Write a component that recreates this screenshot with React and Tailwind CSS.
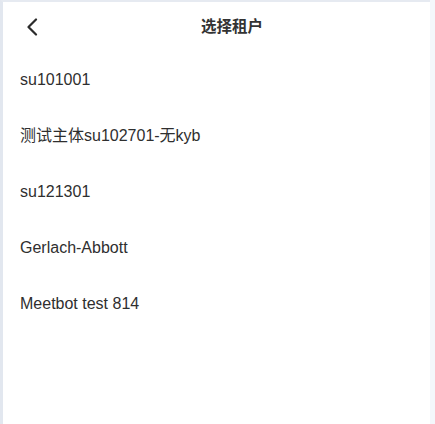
const tenants = [
  "su101001",
  "测试主体su102701-无kyb",
  "su121301",
  "Gerlach-Abbott",
  "Meetbot test 814",
];

export default function App() {
  return (
    <div
      className="h-[424px] w-[435px] bg-[#f4f7fb] pr-[5px]"
      style={{ fontFamily: '"Liberation Sans", "Noto Sans CJK SC", sans-serif' }}
    >
      <div className="h-full border-l-[3px] border-t-2 border-l-[#e2e7ef] border-t-[#e6eaf1] bg-white">
        {/* Header */}
        <div className="flex h-[50px] items-center">
          <button className="flex h-full w-[50px] items-center justify-center pl-[7px]">
            <svg width="12" height="18" viewBox="0 0 12 18" fill="none">
              <polyline
                points="10,1.5 2.5,9 10,16.5"
                stroke="#2b2b2b"
                strokeWidth="2.2"
                strokeLinecap="round"
                strokeLinejoin="round"
              />
            </svg>
          </button>
          <div className="flex-1 pl-[148px] text-[15.5px] font-semibold text-[#333]">
            选择租户
          </div>
        </div>

        {/* Tenant list */}
        <ul>
          {tenants.map((name) => (
            <li
              key={name}
              className="flex h-14 items-center pl-[17px] text-[16px] text-[#2f2f2f]"
            >
              {name}
            </li>
          ))}
        </ul>
      </div>
    </div>
  );
}
